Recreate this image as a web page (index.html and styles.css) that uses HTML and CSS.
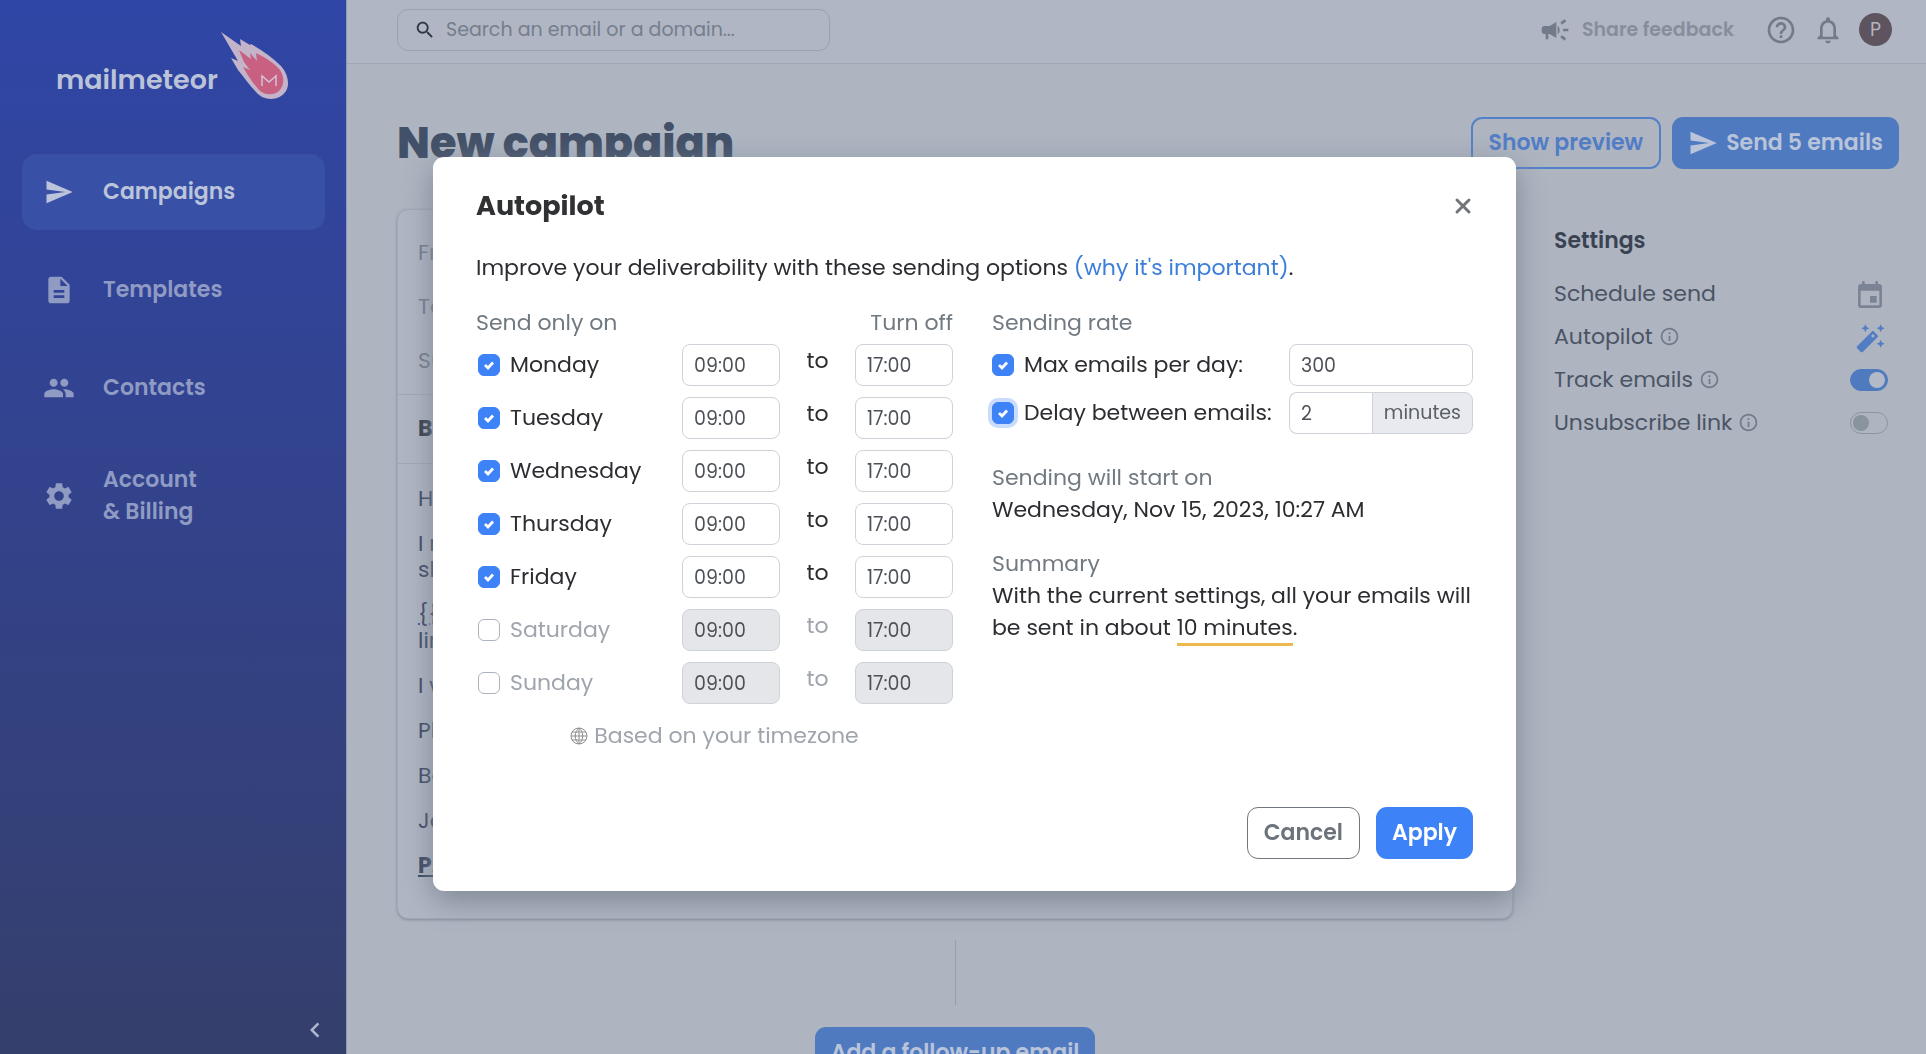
FILE: index.html
```html
<!DOCTYPE html>
<html lang="en">
<head>
<meta charset="utf-8">
<meta name="viewport" content="width=device-width, initial-scale=1">
<title>New campaign - Mailmeteor</title>
<link rel="stylesheet" href="styles.css">
</head>
<body>
<div class="app">
  <aside class="sidebar">
    <a class="logo" href="#">
      <span class="logo-name">mailmeteor</span>
      <svg class="logo-mark" viewBox="0 0 68 68" aria-hidden="true">
        <path fill="#c3b4ca" d="M0 0 20 14 19 7 29 13 30 12C41 18 51 25 60 34 67 42 69 52 65 59 60 67 50 69 41 65 33 60 26 49 17 38L10 26 17 29Z"/>
        <path fill="#c86081" d="M18 18 30 27 29 21 36 29 35 21C47 27 54 32 59 38 64 46 63 54 58 59 52 64 43 63 38 58 32 51 27 44 22 35L29 38 23 30Z"/>
        <path fill="none" stroke="#d3c2d2" stroke-width="1.5" d="M41 54V44L48 50 55 44V54"/>
      </svg>
    </a>
    <nav class="nav">
      <a class="nav-item is-active" href="#">
        <svg class="icon-30" viewBox="0 0 24 24" aria-hidden="true"><path d="M2 21 23 12 2 3v7l15 2-15 2z"/></svg>
        <span>Campaigns</span>
      </a>
      <a class="nav-item" href="#">
        <svg class="icon-32" viewBox="0 0 24 24" aria-hidden="true"><path d="M14 2H6c-1.100 0-2 .9-2 2v16c0 1.100.9 2 2 2h12c1.100 0 2-.9 2-2V8zm2 16H8v-2h8zm0-4H8v-2h8zm-3-5V3.500L18.500 9z"/></svg>
        <span>Templates</span>
      </a>
      <a class="nav-item" href="#">
        <svg class="icon-32" viewBox="0 0 24 24" aria-hidden="true"><path d="M16 11c1.660 0 3-1.340 3-3s-1.340-3-3-3-3 1.340-3 3 1.340 3 3 3zm-8 0c1.660 0 3-1.340 3-3S9.660 5 8 5 5 6.340 5 8s1.340 3 3 3zm0 2c-2.330 0-7 1.170-7 3.500V19h14v-2.500c0-2.330-4.670-3.500-7-3.500zm8 0c-.29 0-.62.020-.97.050C16.190 13.890 17 15.020 17 16.500V19h6v-2.500c0-2.330-4.670-3.500-7-3.500z"/></svg>
        <span>Contacts</span>
      </a>
      <a class="nav-item" href="#">
        <svg class="icon-32" viewBox="0 0 24 24" aria-hidden="true"><path d="M19.140 12.940c.04-.3.06-.61.06-.94 0-.32-.02-.64-.07-.94l2.030-1.580c.18-.14.23-.41.12-.61l-1.920-3.320c-.12-.22-.37-.29-.59-.22l-2.390.96c-.5-.38-1.030-.7-1.620-.94l-.36-2.540c-.04-.24-.24-.41-.48-.41h-3.840c-.24 0-.43.17-.47.41l-.36 2.540c-.59.24-1.130.57-1.620.94l-2.390-.96c-.22-.08-.47 0-.59.22L2.740 8.870c-.12.21-.08.47.12.61l2.030 1.580c-.05.3-.09.63-.09.94s.02.64.07.94l-2.030 1.580c-.18.14-.23.41-.12.61l1.920 3.320c.12.22.37.29.59.22l2.390-.96c.5.38 1.030.7 1.620.94l.36 2.540c.05.24.24.41.48.41h3.840c.24 0 .44-.17.47-.41l.36-2.540c.59-.24 1.130-.56 1.620-.94l2.390.96c.22.08.47 0 .59-.22l1.920-3.320c.12-.22.07-.47-.12-.61zM12 15.600c-1.980 0-3.600-1.620-3.600-3.600s1.620-3.600 3.600-3.600 3.600 1.620 3.600 3.600-1.620 3.600-3.600 3.600z"/></svg>
        <span>Account<br>&amp; Billing</span>
      </a>
    </nav>
    <button class="collapse" type="button" aria-label="Collapse the menu">
      <svg viewBox="4 0 16 24" aria-hidden="true"><path d="M15.410 7.410 14 6l-6 6 6 6 1.410-1.410L10.830 12z"/></svg>
    </button>
  </aside>

  <div class="page">
    <header class="topbar">
      <label class="search">
        <svg class="icon-22" viewBox="0 0 24 24" aria-hidden="true"><path d="M15.500 14h-.79l-.28-.27C15.410 12.590 16 11.110 16 9.500 16 5.910 13.090 3 9.500 3S3 5.910 3 9.500 5.910 16 9.500 16c1.610 0 3.090-.59 4.230-1.570l.27.28v.79l5 4.990L20.490 19zm-6 0C7.010 14 5 11.990 5 9.500S7.010 5 9.500 5 14 7.010 14 9.500 11.990 14 9.500 14z"/></svg>
        <input type="search" placeholder="Search an email or a domain..." aria-label="Search an email or a domain">
      </label>
      <div class="topbar-tools">
        <a class="feedback" href="#">
          <svg class="icon-32" viewBox="0 0 24 24" aria-hidden="true"><path d="M18 11v2h4v-2zm-2 6.610c.96.71 2.210 1.650 3.200 2.390.4-.53.8-1.070 1.200-1.600-.99-.74-2.240-1.680-3.200-2.400-.4.540-.8 1.080-1.200 1.610zM20.400 5.600c-.4-.53-.8-1.070-1.200-1.600-.99.740-2.240 1.680-3.200 2.400.4.530.8 1.070 1.200 1.600.96-.72 2.210-1.650 3.200-2.400zM4 9c-1.100 0-2 .9-2 2v2c0 1.100.9 2 2 2h1v4h2v-4h1l5 3V6L8 9zm11.500 3c0-1.330-.58-2.530-1.500-3.350v6.690c.92-.81 1.500-2.010 1.500-3.340z"/></svg>
          <span>Share feedback</span>
        </a>
        <button class="tool" type="button" aria-label="Help">
          <svg class="icon-32" viewBox="0 0 24 24" aria-hidden="true"><path d="M11 18h2v-2h-2zm1-16C6.480 2 2 6.480 2 12s4.480 10 10 10 10-4.480 10-10S17.520 2 12 2zm0 18c-4.410 0-8-3.590-8-8s3.590-8 8-8 8 3.590 8 8-3.590 8-8 8zm0-14c-2.210 0-4 1.790-4 4h2c0-1.100.9-2 2-2s2 .9 2 2c0 2-3 1.750-3 5h2c0-2.250 3-2.500 3-5 0-2.210-1.790-4-4-4z"/></svg>
        </button>
        <button class="tool" type="button" aria-label="Notifications">
          <svg class="icon-32" viewBox="0 0 24 24" aria-hidden="true"><path d="M12 22c1.100 0 2-.9 2-2h-4c0 1.100.9 2 2 2zm6-6v-5c0-3.070-1.630-5.640-4.500-6.320V4c0-.83-.67-1.500-1.500-1.500s-1.500.67-1.500 1.500v.68C7.640 5.360 6 7.920 6 11v5l-2 2v1h16v-1zm-2 1H8v-6c0-2.480 1.510-4.500 4-4.500s4 2.020 4 4.500z"/></svg>
        </button>
        <button class="avatar" type="button">P</button>
      </div>
    </header>

    <main class="main">
      <div class="heading">
        <h1>New campaign</h1>
        <div class="heading-actions">
          <button class="btn btn-preview" type="button">Show preview</button>
          <button class="btn btn-send" type="button">
            <svg class="icon-30" viewBox="0 0 24 24" aria-hidden="true"><path d="M2 21 23 12 2 3v7l15 2-15 2z"/></svg>
            Send 5 emails
          </button>
        </div>
      </div>

      <div class="columns">
        <div class="composer">
          <article class="card">
            <div class="fields">
              <p>From</p>
              <p>To</p>
              <p>Subject</p>
            </div>
            <h2 class="toolbar">B</h2>
            <div class="message">
              <p>Hi,</p>
              <p>I noticed<br>show</p>
              <p><a href="#">{{link}}</a><br>link</p>
              <p>I would</p>
              <p>Please</p>
              <p>Best,</p>
              <p>John</p>
              <p><b>P.S.</b></p>
            </div>
          </article>
          <div class="connector"></div>
          <button class="btn btn-followup" type="button">Add a follow-up email</button>
        </div>

        <section class="settings">
          <h2>Settings</h2>
          <div class="setting">
            <span>Schedule send</span>
            <button class="setting-action" type="button" aria-label="Schedule send">
              <svg class="icon-32" viewBox="0 0 24 24" aria-hidden="true"><path d="M17 12h-5v5h5zM16 1v2H8V1H6v2H5c-1.110 0-1.990.9-1.990 2L3 19c0 1.100.89 2 2 2h14c1.100 0 2-.9 2-2V5c0-1.100-.9-2-2-2h-1V1zm3 18H5V8h14z"/></svg>
            </button>
          </div>
          <div class="setting">
            <span>Autopilot</span>
            <svg class="icon-info" viewBox="0 0 24 24" aria-hidden="true"><path d="M11 7h2v2h-2zm0 4h2v6h-2zm1-9C6.480 2 2 6.480 2 12s4.480 10 10 10 10-4.480 10-10S17.520 2 12 2zm0 18c-4.410 0-8-3.590-8-8s3.590-8 8-8 8 3.590 8 8-3.590 8-8 8z"/></svg>
            <button class="setting-action is-on" type="button" aria-label="Autopilot">
              <svg class="icon-32" viewBox="0 0 24 24" aria-hidden="true"><path d="M20 7l.94-2.060L23 4l-2.060-.94L20 1l-.94 2.060L17 4l2.060.94zM8.500 7l.94-2.060L11.500 4l-2.060-.94L8.500 1l-.94 2.060L5.500 4l2.060.94zM20 12.500l-.94 2.060-2.060.94 2.060.94.940 2.060.94-2.060L23 15.500l-2.060-.94zM17.710 9.120l-2.830-2.830C14.680 6.100 14.430 6 14.170 6c-.26 0-.51.100-.71.290L2.290 17.460c-.39.390-.39 1.020 0 1.410l2.830 2.830c.2.200.45.300.71.300s.51-.1.710-.29l11.170-11.170c.39-.39.39-1.030 0-1.420zm-3.540 2-1.410-1.410 1.420-1.420L15.600 9.700z"/></svg>
            </button>
          </div>
          <div class="setting">
            <label for="track">Track emails</label>
            <svg class="icon-info" viewBox="0 0 24 24" aria-hidden="true"><path d="M11 7h2v2h-2zm0 4h2v6h-2zm1-9C6.480 2 2 6.480 2 12s4.480 10 10 10 10-4.480 10-10S17.520 2 12 2zm0 18c-4.410 0-8-3.590-8-8s3.590-8 8-8 8 3.590 8 8-3.590 8-8 8z"/></svg>
            <input class="toggle" id="track" type="checkbox" checked>
          </div>
          <div class="setting">
            <label for="unsubscribe">Unsubscribe link</label>
            <svg class="icon-info" viewBox="0 0 24 24" aria-hidden="true"><path d="M11 7h2v2h-2zm0 4h2v6h-2zm1-9C6.480 2 2 6.480 2 12s4.480 10 10 10 10-4.480 10-10S17.520 2 12 2zm0 18c-4.410 0-8-3.590-8-8s3.590-8 8-8 8 3.590 8 8-3.590 8-8 8z"/></svg>
            <input class="toggle" id="unsubscribe" type="checkbox">
          </div>
        </section>
      </div>
    </main>
  </div>
</div>

<div class="modal-layer">
  <div class="modal" role="dialog" aria-modal="true" aria-labelledby="modal-title">
    <header class="modal-header">
      <h2 id="modal-title">Autopilot</h2>
      <button class="close" type="button" aria-label="Close">
        <svg viewBox="0 0 20 20" aria-hidden="true"><path d="M4 4 16 16M16 4 4 16"/></svg>
      </button>
    </header>
    <p class="intro">Improve your deliverability with these sending options <a href="#">(why it's important)</a>.</p>
    <div class="modal-columns">
      <section>
        <div class="section-head">
          <span>Send only on</span>
          <button class="turn-off" type="button">Turn off</button>
        </div>
        <div class="days">
          <div class="day">
            <label class="check"><input type="checkbox" checked><span>Monday</span></label>
            <input class="field" type="text" value="09:00" aria-label="Monday start">
            <span class="to">to</span>
            <input class="field" type="text" value="17:00" aria-label="Monday end">
          </div>
          <div class="day">
            <label class="check"><input type="checkbox" checked><span>Tuesday</span></label>
            <input class="field" type="text" value="09:00" aria-label="Tuesday start">
            <span class="to">to</span>
            <input class="field" type="text" value="17:00" aria-label="Tuesday end">
          </div>
          <div class="day">
            <label class="check"><input type="checkbox" checked><span>Wednesday</span></label>
            <input class="field" type="text" value="09:00" aria-label="Wednesday start">
            <span class="to">to</span>
            <input class="field" type="text" value="17:00" aria-label="Wednesday end">
          </div>
          <div class="day">
            <label class="check"><input type="checkbox" checked><span>Thursday</span></label>
            <input class="field" type="text" value="09:00" aria-label="Thursday start">
            <span class="to">to</span>
            <input class="field" type="text" value="17:00" aria-label="Thursday end">
          </div>
          <div class="day">
            <label class="check"><input type="checkbox" checked><span>Friday</span></label>
            <input class="field" type="text" value="09:00" aria-label="Friday start">
            <span class="to">to</span>
            <input class="field" type="text" value="17:00" aria-label="Friday end">
          </div>
          <div class="day is-off">
            <label class="check"><input type="checkbox"><span>Saturday</span></label>
            <input class="field" type="text" value="09:00" aria-label="Saturday start" disabled>
            <span class="to">to</span>
            <input class="field" type="text" value="17:00" aria-label="Saturday end" disabled>
          </div>
          <div class="day is-off">
            <label class="check"><input type="checkbox"><span>Sunday</span></label>
            <input class="field" type="text" value="09:00" aria-label="Sunday start" disabled>
            <span class="to">to</span>
            <input class="field" type="text" value="17:00" aria-label="Sunday end" disabled>
          </div>
        </div>
        <p class="timezone">
          <svg viewBox="0 0 18 18" aria-hidden="true"><path d="M9 1a8 8 0 1 0 0 16A8 8 0 1 0 9 1ZM9 1v16M9 1C4 5 4 13 9 17M9 1c5 4 5 12 0 16M1 9h16M2 5h14M2 13h14"/></svg>
          Based on your timezone
        </p>
      </section>
      <section>
        <div class="section-head"><span>Sending rate</span></div>
        <div class="rates">
          <div class="rate">
            <label class="check"><input type="checkbox" checked><span>Max emails per day:</span></label>
            <input class="field" type="text" value="300" aria-label="Max emails per day">
          </div>
          <div class="rate">
            <label class="check is-focused"><input type="checkbox" checked><span>Delay between emails:</span></label>
            <div class="field-group">
              <input class="field" type="text" value="2" aria-label="Delay between emails">
              <span class="unit">minutes</span>
            </div>
          </div>
        </div>
        <dl class="facts">
          <dt>Sending will start on</dt>
          <dd>Wednesday, Nov 15, 2023, 10:27 AM</dd>
          <dt>Summary</dt>
          <dd>With the current settings, all your emails will be sent in about <span class="duration">10 minutes</span>.</dd>
        </dl>
      </section>
    </div>
    <footer class="modal-footer">
      <button class="btn btn-cancel" type="button">Cancel</button>
      <button class="btn btn-apply" type="button">Apply</button>
    </footer>
  </div>
</div>
</body>
</html>
```
FILE: styles.css
```css
* {
  box-sizing: border-box;
}

body {
  margin: 0;
  overflow: hidden;
  background: #aeb5c1;
  color: #2b2d30;
  font-family: Poppins, Inter, "Noto Sans", sans-serif;
  font-size: 22px;
  line-height: 32px;
}

h1, h2, p, dl, dd {
  margin: 0;
}

a {
  color: inherit;
  text-decoration: none;
}

button, input {
  margin: 0;
  font: inherit;
  color: inherit;
}

button {
  padding: 0;
  border: 0;
  background: none;
  cursor: pointer;
}

svg {
  display: block;
  flex: none;
  fill: currentColor;
}

.icon-22 { width: 22px; height: 22px; }
.icon-30 { width: 30px; height: 30px; }
.icon-32 { width: 32px; height: 32px; }

.app {
  display: flex;
  height: 100vh;
}

/* Sidebar */

.sidebar {
  display: flex;
  flex: none;
  flex-direction: column;
  width: 347px;
  padding: 32px 21px 9px 22px;
  border-right: 1px solid #8e98b8;
  background: linear-gradient(#3046a6, #33428a 50%, #353f6c);
  color: #8f9bc3;
}

.logo {
  display: flex;
  gap: 3px;
  height: 68px;
  margin: 0 34px 54px;
  color: #bbc3d8;
}

.logo-name {
  padding-top: 32px;
  font-size: 27px;
  font-weight: 600;
}

.logo-mark {
  width: 68px;
  height: 68px;
}

.nav {
  display: flex;
  flex-direction: column;
  gap: 22px;
  font-weight: 600;
}

.nav-item {
  display: flex;
  align-items: center;
  gap: 28px;
  min-height: 76px;
  padding: 16px 21px;
  border-radius: 15px;
}

.nav-item svg {
  width: 32px;
}

.nav-item.is-active {
  background: #3850a5;
  color: #bbc4da;
}

.collapse {
  align-self: flex-end;
  margin-top: auto;
  color: #b0b8cc;
}

.collapse svg {
  width: 20px;
  height: 30px;
}

/* Top bar */

.page {
  flex: 1;
  min-width: 0;
}

.topbar {
  display: flex;
  align-items: center;
  justify-content: space-between;
  height: 64px;
  padding: 0 34px 4px 50px;
  border-bottom: 1px solid #a0a8b5;
  background: #b0b6c3;
  color: #727b89;
}

.search {
  display: flex;
  align-items: center;
  gap: 10px;
  width: 433px;
  height: 42px;
  padding: 0 16px;
  border: 1px solid #9aa2af;
  border-radius: 11px;
  color: #303641;
}

.search input {
  flex: 1;
  min-width: 0;
  padding: 0;
  border: 0;
  outline: 0;
  background: none;
  font-size: 19px;
}

.search input::placeholder {
  color: #757e8c;
  opacity: 1;
}

.topbar-tools {
  display: flex;
  align-items: center;
}

.feedback {
  display: flex;
  align-items: center;
  gap: 11px;
  margin-right: 31px;
  font-size: 19px;
  font-weight: 600;
}

.feedback span {
  color: #868e9c;
}

.tool {
  margin-right: 15px;
}

.avatar {
  width: 33px;
  height: 33px;
  border-radius: 50%;
  background: #5d5460;
  color: #b5b3bd;
  font-size: 19px;
}

/* Page content */

.main {
  padding: 53px 27px 0 50px;
}

.heading {
  display: flex;
  align-items: center;
  justify-content: space-between;
  height: 52px;
}

h1 {
  color: #425068;
  font-size: 43px;
  font-weight: 800;
}

.heading-actions {
  display: flex;
  gap: 11px;
}

.btn {
  display: flex;
  align-items: center;
  justify-content: center;
  gap: 8px;
  height: 52px;
  padding: 0 16px;
  border-radius: 11px;
  font-weight: 600;
  white-space: nowrap;
}

.btn-preview {
  border: 2px solid #5480c8;
  color: #527dc5;
}

.btn-send,
.btn-followup {
  background: #507ac0;
  color: #b9c4da;
}

.columns {
  display: grid;
  grid-template-columns: minmax(0, 1fr) 345px;
  gap: 41px;
  margin-top: 40px;
}

.composer {
  display: flex;
  flex-direction: column;
  align-items: center;
}

.card {
  align-self: stretch;
  height: 710px;
  border: 1px solid #a1a8b5;
  border-radius: 11px;
  background: #b0b6c3;
  box-shadow: 0 1px 3px #858c9a;
}

.fields {
  display: grid;
  gap: 22px;
  padding: 27px 20px 17px;
  color: #727a89;
}

.toolbar {
  padding: 18px 20px;
  border: 1px solid #a0a8b5;
  border-width: 1px 0;
  color: #303846;
  font-size: 22px;
}

.message {
  display: grid;
  gap: 19px;
  padding: 22px 20px;
  color: #35425c;
  line-height: 26px;
}

.message a {
  text-decoration: underline #3550b0 2px;
}

.message b {
  text-decoration: underline;
}

.connector {
  width: 1px;
  height: 65px;
  margin: 21px 0 22px;
  background: #979eac;
}

/* Settings column */

.settings {
  padding: 16px 11px 0 0;
  color: #4b5464;
}

.settings h2 {
  margin-bottom: 15px;
  color: #3a4352;
  font-size: 22px;
  font-weight: 600;
}

.setting {
  display: flex;
  align-items: center;
  gap: 6px;
  height: 43px;
}

.icon-info {
  width: 21px;
  height: 21px;
  color: #727b8a;
}

.setting-action,
.toggle {
  margin-left: auto;
}

.setting-action {
  padding: 4px 2px 0 0;
  color: #7b8495;
}

.setting-action.is-on {
  color: #527dc5;
}

.toggle {
  display: flex;
  align-items: center;
  width: 38px;
  height: 22px;
  padding: 2px;
  border: 1px solid #8d95a1;
  border-radius: 11px;
  appearance: none;
}

.toggle::before {
  width: 16px;
  height: 16px;
  border-radius: 50%;
  background: #8a949f;
  content: "";
}

.toggle:checked {
  justify-content: flex-end;
  border-color: #507ac0;
  background: #507ac0;
}

.toggle:checked::before {
  background: #b2bac8;
}

/* Autopilot dialog */

.modal-layer {
  position: fixed;
  inset: 0 0 6px 23px;
  display: flex;
  align-items: center;
  justify-content: center;
}

.modal {
  width: 1083px;
  max-width: 100%;
  padding: 33px 43px 32px;
  border-radius: 11px;
  background: #fff;
  box-shadow: 0 10px 30px #7f8795;
}

.modal-header {
  display: flex;
  align-items: center;
  justify-content: space-between;
  margin-bottom: 30px;
}

.modal-header h2 {
  color: #303133;
  font-size: 27px;
  font-weight: 700;
}

.close svg {
  width: 20px;
  height: 20px;
  fill: none;
  stroke: #71757a;
  stroke-width: 3;
  stroke-linecap: round;
}

.intro a {
  color: #3b7fd9;
}

.modal-columns {
  display: grid;
  grid-template-columns: 477px minmax(0, 1fr);
  gap: 39px;
  margin-top: 23px;
}

.section-head {
  display: flex;
  justify-content: space-between;
  margin-bottom: 5px;
  color: #717981;
}

.days {
  display: grid;
  gap: 11px;
}

.day {
  display: grid;
  grid-template-columns: minmax(0, 1fr) 98px 75px 98px;
  align-items: center;
}

.check {
  display: flex;
  align-items: center;
  gap: 10px;
}

.check input {
  width: 22px;
  height: 22px;
  border: 1px solid #adb3bd;
  border-radius: 6px;
  appearance: none;
}

.check input:checked {
  border-color: #3d82f6;
  background: #3d82f6 url("data:image/svg+xml,%3Csvg xmlns='http://www.w3.org/2000/svg' viewBox='0 0 20 20'%3E%3Cpath d='M6 10 9 13 14 7.500' fill='none' stroke='white' stroke-width='2.800'/%3E%3C/svg%3E");
}

.check.is-focused input {
  box-shadow: 0 0 0 4px #c9dcfb;
}

.day .check {
  padding-left: 2px;
}

.field {
  width: 100%;
  height: 42px;
  padding: 0 11px;
  border: 1px solid #ced2d9;
  border-radius: 8px;
  background: #fff;
  color: #4c5157;
  font-size: 19px;
}

.to {
  padding-bottom: 8px;
  text-align: center;
}

.is-off {
  color: #9fa4ad;
}

.field:disabled {
  background: #e4e6ea;
}

.timezone {
  display: flex;
  align-items: center;
  justify-content: center;
  gap: 6px;
  margin-top: 16px;
  color: #9fa4ad;
}

.timezone svg {
  width: 18px;
  height: 18px;
  fill: none;
  stroke: #8e8e8e;
}

.rates {
  display: grid;
  gap: 6px;
}

.rate {
  display: grid;
  grid-template-columns: minmax(0, 1fr) 184px;
  align-items: center;
}

.field-group {
  display: grid;
  grid-template-columns: minmax(0, 1fr) auto;
}

.field-group .field {
  border-right: 0;
  border-radius: 8px 0 0 8px;
}

.unit {
  display: flex;
  align-items: center;
  padding: 0 11px;
  border: 1px solid #ced2d9;
  border-radius: 0 8px 8px 0;
  background: #e9eaef;
  color: #5b6068;
  font-size: 19px;
}

.facts {
  margin-top: 28px;
}

.facts dt {
  color: #717981;
}

.facts dd + dt {
  margin-top: 22px;
}

.duration {
  border-bottom: 3px solid #edb94f;
}

.modal-footer {
  display: flex;
  justify-content: flex-end;
  gap: 16px;
  margin-top: 55px;
}

.btn-cancel {
  border: 1px solid #70777f;
  color: #6c737b;
}

.btn-apply {
  background: #3d82f6;
  color: #fff;
}
```
